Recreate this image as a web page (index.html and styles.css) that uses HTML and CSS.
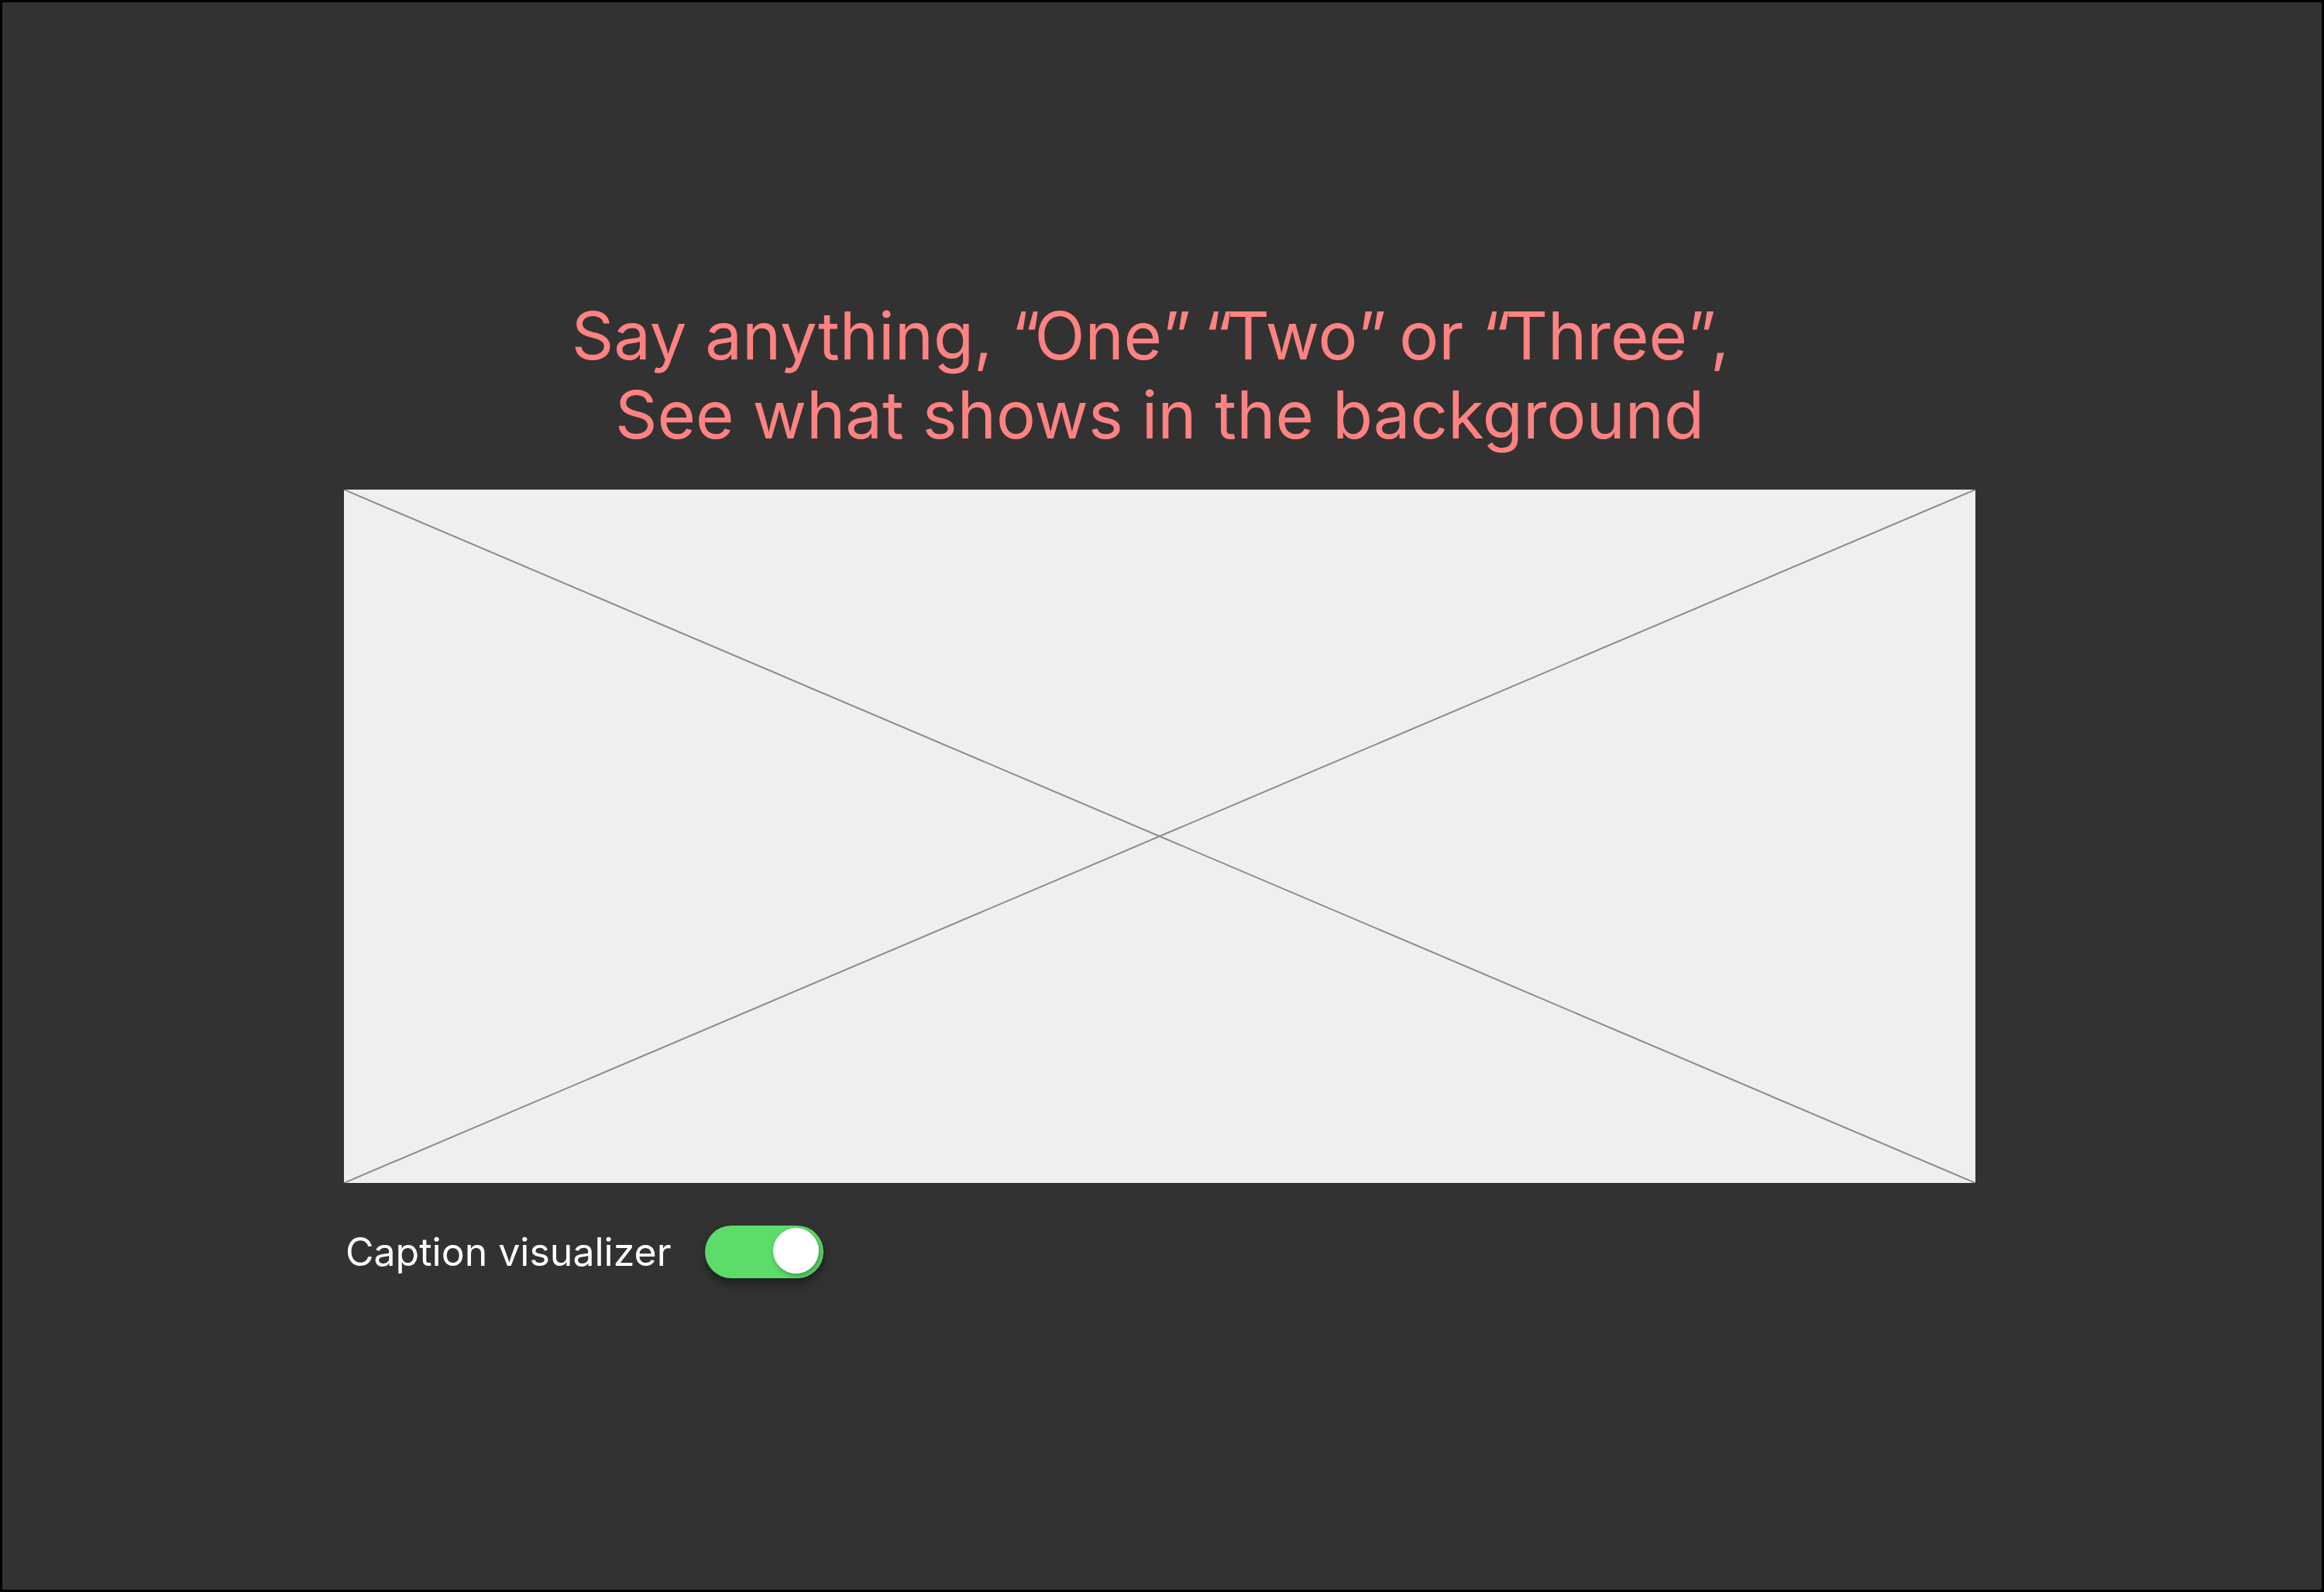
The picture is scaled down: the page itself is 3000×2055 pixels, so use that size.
FILE: index.html
```html
<!DOCTYPE html>
<html lang="en">
<head>
<meta charset="utf-8">
<title>Caption visualizer</title>
<link rel="stylesheet" href="styles.css">
</head>
<body>
<div class="page">
  <main class="content">
    <h1 class="prompt">Say anything, <span class="q">“</span>One<span class="q">”</span> <span class="q">“</span>Two<span class="q">”</span> or <span class="q">“</span>Three<span class="q">”</span>,&nbsp;<br>See what shows in the background</h1>
    <div class="placeholder">
      <svg class="cross" viewBox="0 0 100 100" preserveAspectRatio="none" aria-hidden="true">
        <line x1="0" y1="0" x2="100" y2="100"/>
        <line x1="100" y1="0" x2="0" y2="100"/>
      </svg>
    </div>
    <div class="control-row">
      <span class="control-label">Caption visualizer</span>
      <span class="toggle"><span class="knob"></span></span>
    </div>
  </main>
</div>
</body>
</html>
```
FILE: styles.css
```css
html, body {
  margin: 0;
  padding: 0;
  background: #000;
}
.page {
  box-sizing: border-box;
  width: 3000px;
  height: 2055px;
  border: 3px solid #000;
  background: #323232;
  font-family: Inter, "Noto Sans", sans-serif;
  padding: 380px 0 0 441px;
}
.content {
  width: 2106px;
  display: flex;
  flex-direction: column;
}
.prompt {
  margin: 0;
  font-size: 85px;
  line-height: 102px;
  font-weight: 400;
  color: #ff8282;
  text-align: center;
}
.q {
  letter-spacing: -7.5px;
}
.placeholder {
  margin-top: 45px;
  height: 895px;
  background: #efefef;
  position: relative;
}
.cross {
  position: absolute;
  inset: 0;
  width: 100%;
  height: 100%;
}
.cross line {
  stroke: #8c8c8c;
  stroke-width: 2px;
  vector-effect: non-scaling-stroke;
}
.control-row {
  margin-top: 55px;
  display: flex;
  align-items: center;
  gap: 43px;
  padding-left: 2px;
}
.control-label {
  font-size: 50px;
  color: #ffffff;
  line-height: 68px;
}
.toggle {
  box-sizing: border-box;
  width: 153px;
  height: 68px;
  border-radius: 34px;
  background: #5cdc69;
  box-shadow: 0 8px 12px rgba(0, 0, 0, 0.35);
  display: flex;
  justify-content: flex-end;
  align-items: center;
  padding: 0 6px 0 0;
}
.knob {
  width: 59px;
  height: 59px;
  border-radius: 50%;
  background: #ffffff;
  box-shadow: 2px 3px 6px rgba(0, 0, 0, 0.3);
  margin-top: -3px;
}
```
